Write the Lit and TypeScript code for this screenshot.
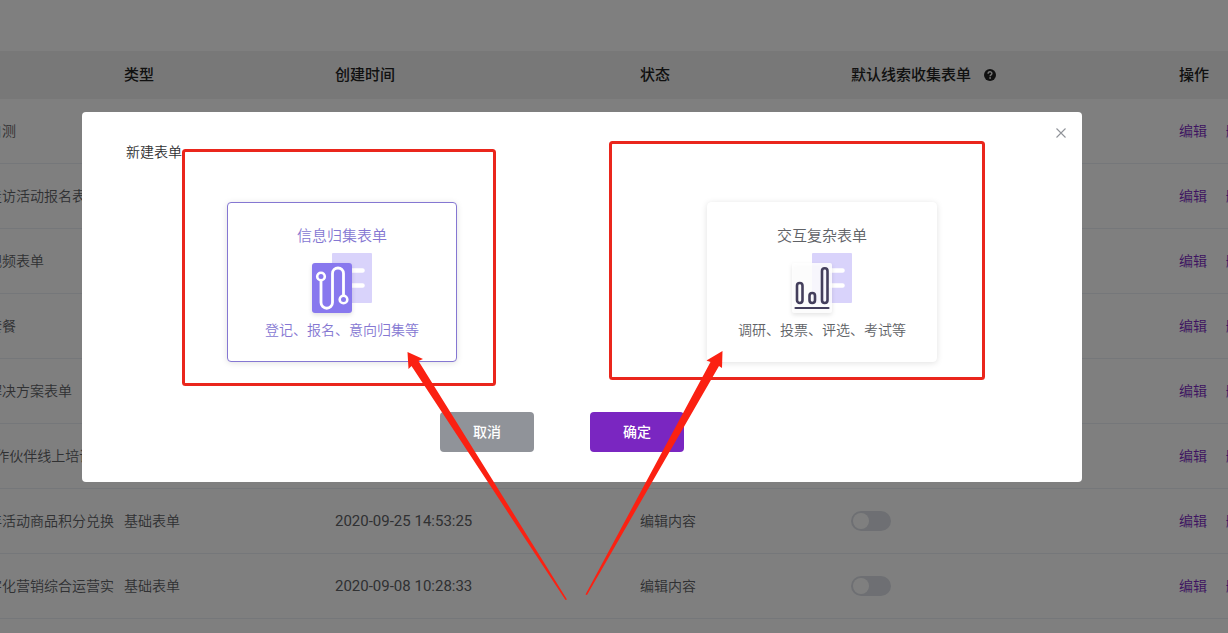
import { LitElement, html, svg, css } from "lit";
import { customElement, property, state } from "lit/decorators.js";

interface FormRow {
  name: string;
  type: string;
  created: string;
  status: string;
  togglable: boolean;
}

const blank = { type: "", created: "", status: "", togglable: false };

const ROWS: FormRow[] = [
  { name: "自测", ...blank },
  { name: "走访活动报名表", ...blank },
  { name: "视频表单", ...blank },
  { name: "套餐", ...blank },
  { name: "解决方案表单", ...blank },
  { name: "\u00a0\u00a0作伙伴线上培训", ...blank },
  { name: "年活动商品积分兑换", type: "基础表单", created: "2020-09-25 14:53:25", status: "编辑内容", togglable: true },
  { name: "字化营销综合运营实", type: "基础表单", created: "2020-09-08 10:28:33", status: "编辑内容", togglable: true },
];

@customElement("form-table")
export class FormTable extends LitElement {
  static styles = css`
    :host {
      display: block;
      overflow: hidden;
      padding-top: 51px;
      background: #fff;
    }
    .table {
      width: calc(100% + 114px);
      min-width: 1240px;
      margin-left: -22px;
      border-collapse: separate;
      border-spacing: 0;
      table-layout: fixed;
    }
    .c-name { width: 136px; }
    .c-type { width: 211px; }
    .c-created { width: 305px; }
    .c-status { width: 211px; }
    .c-ops { width: 151px; }
    th,
    td {
      box-sizing: border-box;
      padding: 0 0 2px 10px;
      text-align: left;
      white-space: nowrap;
      border-bottom: 1px solid #ebeef5;
    }
    th {
      height: 48px;
      background: #f0f0f0;
      border-bottom-color: #f0f0f0;
      color: #222;
      font-size: 15px;
      font-weight: 500;
    }
    td {
      height: 65px;
      color: #606266;
      font-size: 14px;
    }
    .date {
      padding-bottom: 0;
      font-family: Roboto, sans-serif;
      font-size: 15px;
      font-weight: 400;
    }
    .help {
      width: 12px;
      height: 12px;
      margin-left: 13px;
      vertical-align: -1px;
    }
    .link {
      margin-right: 15px;
      color: #7a26c1;
      text-decoration: none;
    }
    .switch {
      display: block;
      appearance: none;
      width: 40px;
      height: 20px;
      margin: 2px 0 0;
      padding: 2px;
      border-radius: 10px;
      background: #dcdfe6;
    }
    .switch::before {
      content: "";
      display: block;
      width: 16px;
      height: 16px;
      border-radius: 50%;
      background: #fff;
    }
    .switch:checked {
      background: #7a26c1;
    }
    .switch:checked::before {
      margin-left: 20px;
    }
  `;

  render() {
    return html`
      <table class="table">
        <colgroup>
          <col class="c-name" />
          <col class="c-type" />
          <col class="c-created" />
          <col class="c-status" />
          <col />
          <col class="c-ops" />
        </colgroup>
        <thead>
          <tr>
            <th></th>
            <th>类型</th>
            <th>创建时间</th>
            <th>状态</th>
            <th>
              默认线索收集表单<svg class="help" viewBox="0 0 12 12" aria-hidden="true">
                <circle cx="6" cy="6" r="6" fill="#222" />
                <path d="M4.1 4.7C4.1 2.2 7.9 2.2 7.9 4.5C7.9 5.9 6.1 5.8 6.1 7.2" fill="none" stroke="#f0f0f0" stroke-width="1.4" />
                <circle cx="6.1" cy="9" r="0.9" fill="#f0f0f0" />
              </svg>
            </th>
            <th>操作</th>
          </tr>
        </thead>
        <tbody>
          ${ROWS.map(
            (r) => html`<tr>
              <td>${r.name}</td>
              <td>${r.type}</td>
              <td class="date">${r.created}</td>
              <td>${r.status}</td>
              <td>
                ${r.togglable
                  ? html`<input class="switch" type="checkbox" role="switch" aria-label=${r.name} />`
                  : ""}
              </td>
              <td><a class="link" href="#edit">编辑</a> <a class="link" href="#delete">删除</a></td>
            </tr>`,
          )}
        </tbody>
      </table>
    `;
  }
}

const PATH_ART = svg`
  <rect class="lift" x="0" y="10" width="40" height="50" rx="3" fill="#8878ee" />
  <path d="M9 26V49.500A5.750 5.750 0 0 0 20.500 49.500V20.500A5.500 5.500 0 0 1 31.500 20.500V43" fill="none" stroke="#fff" stroke-width="2.800" />
  <circle cx="9" cy="23.500" r="3.800" fill="#8878ee" stroke="#fff" stroke-width="2.600" />
  <circle cx="31.500" cy="46.500" r="3.800" fill="#8878ee" stroke="#fff" stroke-width="2.600" />
`;

const CHART_ART = svg`
  <rect class="lift" x="0" y="10" width="40" height="50" rx="2" fill="#fff" fill-opacity="0.85" />
  <g fill="none" stroke="#443f5c" stroke-width="2.600">
    <rect x="5" y="30" width="5.500" height="20" rx="2.750" />
    <rect x="17.500" y="40" width="5.500" height="10" rx="2.750" />
    <rect x="30" y="15.300" width="5.500" height="34.700" rx="2.750" />
    <path d="M3.500 55H36.500" stroke-width="2.200" stroke-linecap="round" />
  </g>
`;

@customElement("kind-card")
export class KindCard extends LitElement {
  @property() heading = "";
  @property() note = "";
  @property() art = "path";
  @property({ type: Boolean }) selected = false;

  static styles = css`
    :host {
      display: block;
      width: 230px;
    }
    .card {
      box-sizing: border-box;
      display: flex;
      flex-direction: column;
      align-items: center;
      gap: 6px;
      width: 100%;
      height: 160px;
      padding: 21px 0 0;
      border: 1px solid #fff;
      border-radius: 4px;
      background: #fff;
      box-shadow: 0 1px 6px rgba(0, 0, 0, 0.12);
      color: #606266;
      font: inherit;
      cursor: pointer;
    }
    .card.on {
      border-color: #8577d2;
      color: #8577d2;
    }
    .heading {
      font-size: 15px;
      line-height: 23px;
    }
    .note {
      font-size: 14px;
      line-height: 22px;
    }
    .art {
      width: 60px;
      height: 60px;
      overflow: visible;
    }
    .lift {
      filter: drop-shadow(0 2px 2px rgba(0, 0, 0, 0.12));
    }
  `;

  render() {
    return html`
      <button type="button" class="card ${this.selected ? "on" : ""}" aria-pressed=${this.selected}>
        <span class="heading">${this.heading}</span>
        <svg class="art" viewBox="0 0 60 60" aria-hidden="true">
          <rect x="20" y="0" width="40" height="50" rx="1" fill="#d9d3fb" />
          <path d="M38 17.500H50.500M38 32.500H50.500" stroke="#fff" stroke-width="4.600" stroke-linecap="round" />
          ${this.art === "path" ? PATH_ART : CHART_ART}
        </svg>
        <span class="note">${this.note}</span>
      </button>
    `;
  }
}

@customElement("app-root")
export class AppRoot extends LitElement {
  @state() private kind = "path";

  static styles = css`
    :host {
      display: block;
      position: relative;
      height: 100vh;
      overflow: hidden;
      font-family: "Noto Sans", "Noto Sans CJK SC", sans-serif;
      font-weight: 350;
    }
    .mask {
      position: absolute;
      inset: 0;
      box-sizing: border-box;
      display: flex;
      justify-content: center;
      align-items: flex-start;
      padding: 112px 64px 0 0;
      background: rgba(0, 0, 0, 0.5);
    }
    .dialog {
      position: relative;
      box-sizing: border-box;
      width: 1000px;
      padding: 30px 44px;
      border-radius: 4px;
      background: #fff;
    }
    .title {
      margin: 0;
      color: #303133;
      font-size: 14px;
      font-weight: inherit;
      line-height: 20px;
    }
    .close {
      position: absolute;
      top: 11px;
      right: 11px;
      width: 20px;
      height: 20px;
      padding: 5px;
      border: 0;
      background: none;
      cursor: pointer;
    }
    .cross {
      display: block;
      width: 10px;
      height: 10px;
    }
    .cards {
      display: flex;
      justify-content: space-between;
      margin: 40px 101px 50px;
    }
    .actions {
      display: flex;
      justify-content: center;
      gap: 56px;
      padding-right: 40px;
    }
    .btn {
      width: 94px;
      height: 40px;
      padding: 0 0 2px;
      border: 0;
      border-radius: 4px;
      color: #fff;
      font: inherit;
      font-size: 14px;
      font-weight: 500;
      cursor: pointer;
    }
    .cancel { background: #909399; }
    .ok { background: #7a26c1; }
    .marks {
      position: absolute;
      top: 0;
      left: 0;
      width: 1000px;
      height: 500px;
      overflow: visible;
      pointer-events: none;
    }
  `;

  render() {
    return html`
      <form-table></form-table>
      <div class="mask">
        <section class="dialog" role="dialog" aria-labelledby="title">
          <h2 class="title" id="title">新建表单</h2>
          <button type="button" class="close" aria-label="关闭">
            <svg class="cross" viewBox="0 0 10 10"><path d="M0.500 0.500L9.500 9.500M9.500 0.500L0.500 9.500" stroke="#909399" stroke-width="1.100" /></svg>
          </button>
          <div class="cards">
            <kind-card
              heading="信息归集表单"
              note="登记、报名、意向归集等"
              art="path"
              ?selected=${this.kind === "path"}
              @click=${() => (this.kind = "path")}
            ></kind-card>
            <kind-card
              heading="交互复杂表单"
              note="调研、投票、评选、考试等"
              art="chart"
              ?selected=${this.kind === "chart"}
              @click=${() => (this.kind = "chart")}
            ></kind-card>
          </div>
          <div class="actions">
            <button type="button" class="btn cancel">取消</button>
            <button type="button" class="btn ok">确定</button>
          </div>
          <svg class="marks" viewBox="0 0 1000 500" aria-hidden="true">
            <g fill="none" stroke="#ea261c" stroke-width="3">
              <rect x="101.500" y="38.500" width="311" height="234" rx="2" />
              <rect x="528.500" y="30.500" width="373" height="236" rx="2" />
            </g>
            <g fill="#fb2112">
              <path d="M325.500 240L341 247L336.500 249L485 487.500L483.500 488L329.500 254L326.500 257Z" />
              <path d="M640.500 239L624.500 248.500L628.500 250L503.500 482.500L505 483L637 254L640 256Z" />
            </g>
          </svg>
        </section>
      </div>
    `;
  }
}
